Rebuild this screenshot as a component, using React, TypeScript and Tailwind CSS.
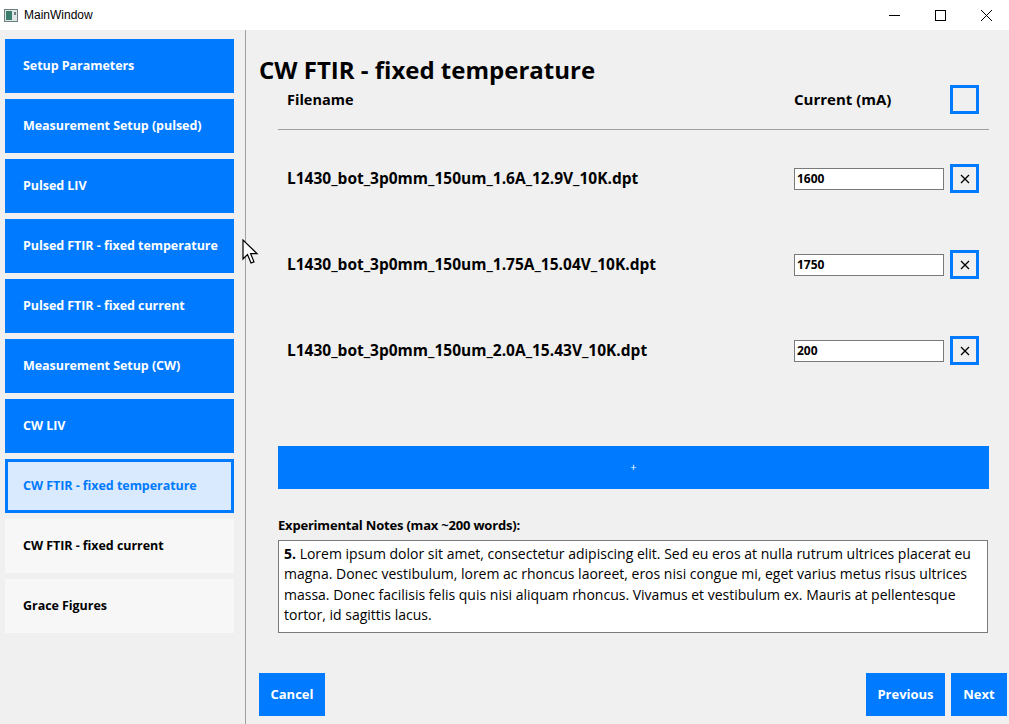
import React from "react";

const blue = "bg-[#007aff]";

const navItems = [
  "Setup Parameters",
  "Measurement Setup (pulsed)",
  "Pulsed LIV",
  "Pulsed FTIR - fixed temperature",
  "Pulsed FTIR - fixed current",
  "Measurement Setup (CW)",
  "CW LIV",
  "CW FTIR - fixed temperature",
  "CW FTIR - fixed current",
  "Grace Figures",
];

const files = [
  { name: "L1430_bot_3p0mm_150um_1.6A_12.9V_10K.dpt", current: "1600" },
  { name: "L1430_bot_3p0mm_150um_1.75A_15.04V_10K.dpt", current: "1750" },
  { name: "L1430_bot_3p0mm_150um_2.0A_15.43V_10K.dpt", current: "200" },
];

function NavButton({ label, index }: { label: string; index: number }) {
  if (index === 7) {
    return (
      <div className="h-[54px] border-[3px] border-[#007aff] bg-[#d9eafe] pl-[15px] pt-[1px] flex items-center text-[12.5px] tracking-[-0.05px] font-bold text-[#007aff]">
        {label}
      </div>
    );
  }
  if (index > 7) {
    return (
      <div className="h-[54px] bg-[#f7f7f7] pl-[18px] pt-[1px] flex items-center text-[12.5px] tracking-[-0.05px] font-bold text-black">
        {label}
      </div>
    );
  }
  return (
    <div className={`h-[54px] ${blue} pl-[18px] pt-[1px] flex items-center text-[12.5px] tracking-[-0.05px] font-bold text-white`}>
      {label}
    </div>
  );
}

function CloseIcon() {
  return (
    <svg width="10" height="10" viewBox="0 0 10 10">
      <path d="M1 1 L9 9 M9 1 L1 9" stroke="#000" strokeWidth="1.3" />
    </svg>
  );
}

export default function App() {
  return (
    <div className="relative w-[1009px] h-[724px] flex flex-col bg-[#f0f0f0] overflow-hidden font-['Open_Sans','Noto_Sans',sans-serif]">
      {/* title bar */}
      <div className="h-[30px] bg-white flex items-center shrink-0">
        <svg width="14" height="13" viewBox="0 0 14 13" className="ml-[4px]">
          <rect x="0.5" y="0.5" width="13" height="12" fill="#dfe6e6" stroke="#6d7d80" />
          <rect x="2" y="2" width="6" height="9" fill="#3a7d6e" />
          <rect x="10" y="3" width="2" height="3" fill="#6d7d80" />
        </svg>
        <span className="ml-[6px] text-[12px] text-black font-['Liberation_Sans',sans-serif]">MainWindow</span>
        <div className="ml-auto flex h-full">
          <div className="w-[46px] h-full flex items-center justify-center">
            <svg width="11" height="11" viewBox="0 0 11 11">
              <path d="M0 5.5 H11" stroke="#000" strokeWidth="1" />
            </svg>
          </div>
          <div className="w-[46px] h-full flex items-center justify-center">
            <svg width="11" height="11" viewBox="0 0 11 11">
              <rect x="0.5" y="0.5" width="10" height="10" fill="none" stroke="#000" strokeWidth="1" />
            </svg>
          </div>
          <div className="w-[46px] h-full flex items-center justify-center">
            <svg width="11" height="11" viewBox="0 0 11 11">
              <path d="M0 0 L11 11 M11 0 L0 11" stroke="#000" strokeWidth="1" />
            </svg>
          </div>
        </div>
      </div>

      <div className="flex flex-1">
        {/* sidebar */}
        <div className="w-[246px] shrink-0 border-r border-[#a0a0a0] pt-[9px] pl-[5px] pr-[11px] flex flex-col gap-[6px]">
          {navItems.map((n, i) => (
            <NavButton key={n} label={n} index={i} />
          ))}
        </div>

        {/* main */}
        <div className="flex-1 flex flex-col pl-[13px] pr-[2px]">
          <h1 className="mt-[25px] h-[30px] leading-[30px] text-[24px] font-bold text-black">
            CW FTIR - fixed temperature
          </h1>
          <div className="ml-[19px] mr-[18px] flex flex-col">
            <div className="h-[29px] flex items-center mr-[10px]">
              <span className="flex-1 pl-[9px] text-[14.5px] font-bold text-black">Filename</span>
              <span className="w-[156px] text-[15px] font-bold text-black">Current (mA)</span>
              <div className="w-[29px] h-[29px] border-[3px] border-[#007aff]" />
            </div>
            <div className="mt-[15px] h-px bg-[#a0a0a0]" />
            {files.map((f, i) => (
              <div key={f.name} className={`${i === 0 ? "mt-[34px]" : "mt-[57px]"} h-[29px] flex items-center mr-[10px]`}>
                <span className="flex-1 pl-[9px] text-[15.5px] font-bold text-black">{f.name}</span>
                <div className="w-[150px] h-[22px] border border-[#7a7a7a] bg-white flex items-center px-[2px] text-[12px] font-bold text-black">
                  {f.current}
                </div>
                <div className="ml-[6px] w-[29px] h-[29px] border-[3px] border-[#007aff] flex items-center justify-center">
                  <CloseIcon />
                </div>
              </div>
            ))}
            <div className={`mt-[81px] h-[43px] ${blue} flex items-center justify-center text-white text-[11px]`}>
              +
            </div>
            <div className="mt-[28px] h-[16px] leading-[16px] text-[13px] font-bold text-black tracking-[-0.2px]">
              Experimental Notes (max ~200 words):
            </div>
            <div className="mt-[7px] h-[93px] mr-[1px] border border-[#7a7a7a] bg-white pl-[5px] pr-[14px] pt-[3px] text-[14px] leading-[20.3px] text-black">
              <b>5.</b> Lorem ipsum dolor sit amet, consectetur adipiscing elit. Sed eu eros at nulla rutrum ultrices placerat eu
              magna. Donec vestibulum, lorem ac rhoncus laoreet, eros nisi congue mi, eget varius metus risus ultrices
              massa. Donec facilisis felis quis nisi aliquam rhoncus. Vivamus et vestibulum ex. Mauris at pellentesque
              tortor, id sagittis lacus.
            </div>
          </div>
          <div className="mt-[40px] flex h-[43px]">
            <div className={`w-[66px] ${blue} flex items-center justify-center text-white text-[13px] font-bold`}>Cancel</div>
            <div className={`ml-auto w-[79px] ${blue} flex items-center justify-center text-white text-[13px] font-bold`}>Previous</div>
            <div className={`ml-[6px] w-[56px] ${blue} flex items-center justify-center text-white text-[13px] font-bold`}>Next</div>
          </div>
        </div>
      </div>

      {/* mouse cursor */}
      <svg width="20" height="28" viewBox="0 0 20 28" className="absolute left-[242px] top-[239px]">
        <path d="M1 1 L1 20 L5.5 15.5 L9 24 L12 22.8 L8.6 14.6 L15 14.6 Z" fill="#fff" stroke="#000" strokeWidth="1.2" strokeLinejoin="miter" />
      </svg>
    </div>
  );
}
